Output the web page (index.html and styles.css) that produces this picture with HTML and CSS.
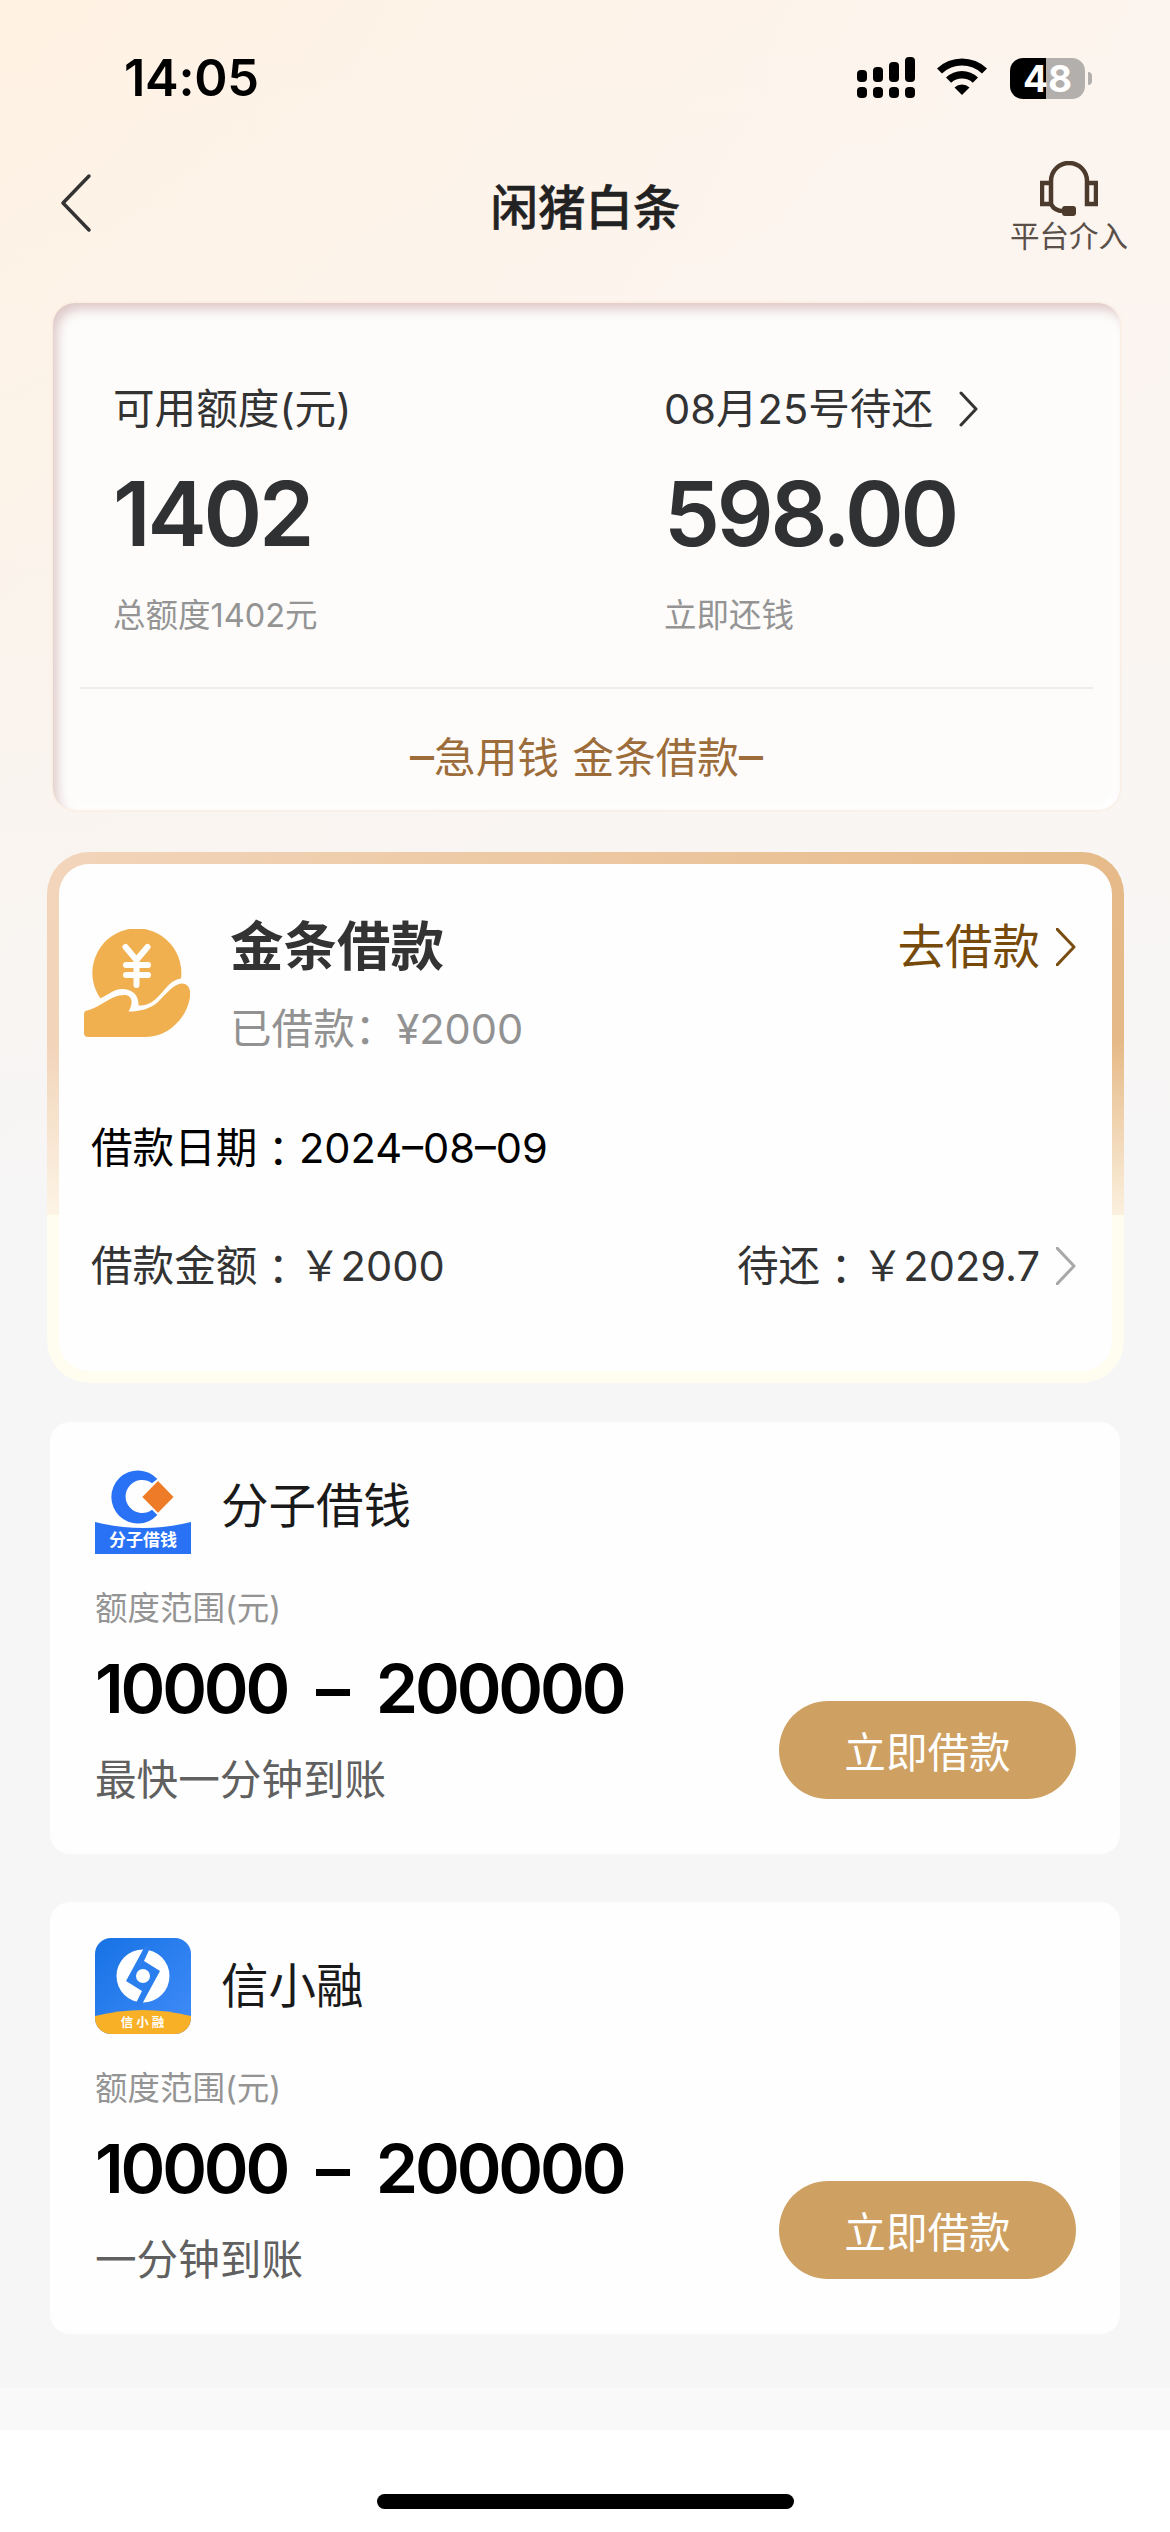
FILE: index.html
```html
<!DOCTYPE html>
<html lang="zh-CN">
<head>
<meta charset="utf-8">
<title>闲猪白条</title>
<link rel="stylesheet" href="styles.css">
</head>
<body>
<div class="screen">
  <header class="status">
    <span class="time">14:05</span>
    <div class="indicators">
      <svg class="signal" width="58" height="42" viewBox="0 0 58 42">
        <rect x="0" y="13" width="10" height="12" rx="4"/><rect x="16" y="10" width="10" height="15" rx="4"/>
        <rect x="32" y="5" width="10" height="20" rx="4"/><rect x="48" y="0" width="10" height="25" rx="4"/>
        <rect x="0" y="30" width="10" height="11" rx="4"/><rect x="16" y="30" width="10" height="11" rx="4"/>
        <rect x="32" y="30" width="10" height="11" rx="4"/><rect x="48" y="30" width="10" height="11" rx="4"/>
      </svg>
      <svg class="wifi" width="50" height="42" viewBox="0 0 50 42">
        <path d="M0 11.5A36 36 0 0 1 50 11.5L45 16.5A29 29 0 0 0 5 16.5Z"/>
        <path d="M9 20.500A23 23 0 0 1 41 20.500L35.800 25.700A16 16 0 0 0 14.200 25.700Z"/>
        <path d="M17.500 30.500A11 11 0 0 1 32.500 30.500L25 38Z"/>
      </svg>
      <div class="battery"><span class="level">48</span><i class="cap"></i></div>
    </div>
  </header>

  <nav class="nav">
    <svg class="back" width="34" height="60" viewBox="0 0 34 60"><path d="M30 3L4 30L30 57"/></svg>
    <h1 class="title">闲猪白条</h1>
    <a class="service">
      <svg width="58" height="56" viewBox="0 0 58 56">
        <path d="M11 22V20A18 18 0 0 1 47 20V22M11 22H2V43H11ZM47 22H56V43H47ZM11 43C14 49 18 50 23 50"/>
        <rect class="mic" x="22" y="45" width="14" height="10" rx="3"/>
      </svg>
      <span>平台介入</span>
    </a>
  </nav>

  <main class="content">
    <section class="quota">
      <div class="columns">
        <div class="column">
          <p class="label">可用额度(元)</p>
          <p class="amount">1402</p>
          <p class="note">总额度1402元</p>
        </div>
        <div class="column">
          <p class="label">08月25号待还<svg class="chevron dark" width="20" height="36" viewBox="0 0 20 36"><path d="M2 2L17 18L2 34"/></svg></p>
          <p class="amount">598.00</p>
          <p class="note">立即还钱</p>
        </div>
      </div>
      <p class="promo"><span class="dash">–</span>急用钱 金条借款<span class="dash">–</span></p>
    </section>

    <section class="loan">
      <div class="loan-body">
        <div class="loan-head">
          <svg class="coin" width="106" height="108" viewBox="0 0 106 108">
            <path class="gold" d="M16.300 69.300A44.500 44.500 0 1 1 97 49.500C84 51 79 66 68 73C63 76 58 76.500 54.500 76.500C55 67 49 60 38 60C30 60 24 66 16.300 69.300Z"/>
            <path class="gold" d="M0 85Q0 82 3 81.500C18 78 26 66 40 66C48 66 50 73 44.500 82.500C56 82.500 66 80 74 73C83 64 90 54.500 98 54.500C104 54.500 107 60 106 68C103 90 83 108 62 108H4Q0 108 0 104Z"/>
            <path class="yen" d="M41.500 18L52.500 31L63.500 18M52.500 31V56M42 36H64M42 46H64"/>
          </svg>
          <div class="loan-name">
            <h2>金条借款</h2>
            <p>已借款：¥2000</p>
          </div>
          <a class="go">去借款<svg class="chevron brown" width="20" height="38" viewBox="0 0 20 38"><path d="M1 1L18 19L1 37"/></svg></a>
        </div>
        <p class="date">借款日期<span class="mid" lang="zh-TW">：</span>2024–08–09</p>
        <div class="due">
          <p>借款金额<span class="mid" lang="zh-TW">：</span>￥2000</p>
          <div class="rest">
            <p>待还<span class="mid" lang="zh-TW">：</span>￥2029.7</p>
            <svg class="chevron gray" width="20" height="38" viewBox="0 0 20 38"><path d="M1 1L18 19L1 37"/></svg>
          </div>
        </div>
      </div>
    </section>

    <section class="product">
      <div class="brand">
        <svg class="logo" width="96" height="96" viewBox="0 0 96 96">
          <path d="M62.300 21A26.500 26.500 0 1 0 62.300 57L57 51.700A16.500 16.500 0 1 1 57 25.300Z" fill="#2a72f5"/>
          <path d="M47.300 39L63 23L78.500 39L63 54.800Z" fill="#ed7b27"/>
          <path d="M0 64Q48 76 96 64V96H0Z" fill="#2a72f5"/>
          <text x="48" y="88" text-anchor="middle" class="logo-text">分子借钱</text>
        </svg>
        <h3>分子借钱</h3>
      </div>
      <div class="offer">
        <div class="terms">
          <p class="range-label">额度范围(元)</p>
          <p class="range">10000 – 200000</p>
          <p class="speed">最快一分钟到账</p>
        </div>
        <button class="apply">立即借款</button>
      </div>
    </section>

    <section class="product">
      <div class="brand">
        <svg class="logo" width="96" height="96" viewBox="0 0 96 96">
          <defs>
            <linearGradient id="blue" x1="0" y1="0" x2="1" y2="1"><stop offset="0" stop-color="#1672e4"/><stop offset="1" stop-color="#428cfa"/></linearGradient>
            <clipPath id="tile"><rect width="96" height="96" rx="16"/></clipPath>
          </defs>
          <g clip-path="url(#tile)">
            <rect width="96" height="96" fill="url(#blue)"/>
            <path d="M0 78Q48 66 96 78V96H0Z" fill="#f8b026"/>
          </g>
          <circle cx="48" cy="38" r="26.500" fill="#fff"/>
          <path d="M50 8L43 21L31 43L47 53L40 67L45 70L53 55L65 33L49 23L55 10Z" fill="#2a7eee"/>
          <circle cx="48" cy="38" r="7" fill="#fff"/>
          <text x="49" y="89" text-anchor="middle" class="logo-text small">信小融</text>
        </svg>
        <h3>信小融</h3>
      </div>
      <div class="offer">
        <div class="terms">
          <p class="range-label">额度范围(元)</p>
          <p class="range">10000 – 200000</p>
          <p class="speed">一分钟到账</p>
        </div>
        <button class="apply">立即借款</button>
      </div>
    </section>
  </main>

  <footer class="home"><div class="home-bar"></div></footer>
</div>
</body>
</html>
```

FILE: styles.css
```css
* { box-sizing: border-box; margin: 0; padding: 0; }

body {
  font-family: Inter, "Noto Sans CJK SC", sans-serif;
  font-weight: 400;
  color: #333;
}

.screen {
  width: 1170px;
  height: 2532px;
  display: flex;
  flex-direction: column;
  overflow: hidden;
  background:
    linear-gradient(to bottom, rgba(246, 246, 246, 0) 0, rgba(246, 246, 247, 0.25) 500px, #f6f6f7 1300px),
    linear-gradient(115deg, #fff2e3 0, #fdf4ed 850px, #fcf5ef 1300px);
}

svg { display: block; flex: none; }

.status {
  height: 156px;
  padding: 0 78px 0 124px;
  display: flex;
  justify-content: space-between;
  align-items: center;
}
.time { font-size: 50.5px; font-weight: 600; line-height: 60px; letter-spacing: -0.3px; color: #000; }
.indicators { display: flex; align-items: center; }
.wifi { margin: 0 23px 0 22px; }
.battery { display: flex; align-items: center; gap: 3px; }
.level {
  width: 75px;
  height: 41px;
  border-radius: 13px;
  background: linear-gradient(to right, #000 36px, #b2afac 36px);
  color: #fff;
  font-size: 37px;
  font-weight: 700;
  line-height: 41px;
  text-align: center;
}
.cap { width: 4px; height: 13px; border-radius: 0 4px 4px 0; background: #b2afac; }

.nav {
  height: 147px;
  padding: 0 42px 0 59px;
  display: grid;
  grid-template-columns: 300px 1fr 300px;
}
.back { margin-top: 17px; fill: none; stroke: #333; stroke-width: 3.5; stroke-linecap: round; stroke-linejoin: round; }
.title {
  margin-top: 22px;
  padding-right: 16px;
  font-size: 47.5px;
  font-weight: 500;
  line-height: 60px;
  text-align: center;
  color: #222;
  -webkit-text-stroke: 0.5px #222;
}
.service { justify-self: end; padding-top: 5px; display: flex; flex-direction: column; align-items: center; }
.service svg { fill: none; stroke: #4c3a2c; stroke-width: 4.5; }
.service .mic { fill: #4c3a2c; stroke: none; }
.service span { margin-top: 1px; font-size: 29.5px; line-height: 36px; color: #5a5049; }

.content { flex: 1; display: flex; flex-direction: column; background: linear-gradient(to bottom, transparent 2085px, #f9f9f9 2085px); }

.quota {
  margin: 0 50px 0 53px;
  height: 507px;
  padding: 0 27px;
  border-radius: 22px;
  background: #fdfcfb;
  box-shadow: inset 5px 7px 12px -1px #dcc6c5, inset -5px -5px 10px #fff, 0 0 3px #fce2cb;
}
.columns {
  height: 386px;
  padding: 76px 33px 0;
  display: grid;
  grid-template-columns: 551px 1fr;
  border-bottom: 2px solid #ececec;
}
.label { display: flex; align-items: center; gap: 26px; font-size: 41.6px; line-height: 60px; }
.amount { margin-top: 20px; font-size: 89px; font-weight: 600; line-height: 110px; letter-spacing: -3.2px; color: #303133; }
.note { margin-top: 23px; font-size: 32.5px; line-height: 48px; color: #949494; }
.promo { margin-top: 39px; font-size: 41.6px; line-height: 60px; text-align: center; word-spacing: 2px; color: #9c6c3a; }
.dash { font-size: 48px; line-height: 1; }

.chevron { fill: none; stroke-width: 3; stroke-linecap: round; stroke-linejoin: round; }
.dark { stroke: #333; }
.brown { stroke: #7a4e12; }
.gray { stroke: #a8a8a8; }

.loan {
  margin: 42px 46px 0 47px;
  height: 531px;
  padding: 12px;
  border-radius: 42px;
  background:
    linear-gradient(to bottom, transparent 190px, rgba(255, 250, 238, 0.85) 363px, #fffdf0 363px),
    linear-gradient(100deg, #f2d5bb, #e5b884);
}
.loan-body { height: 507px; padding: 53px 36px 0 25px; border-radius: 30px; background: #fefefe; }
.loan-head { height: 201px; display: flex; }
.coin { margin-top: 12px; }
.gold { fill: #f0b04f; }
.yen { fill: none; stroke: #fff; stroke-width: 6; stroke-linecap: round; }
.loan-name { margin-left: 40px; flex: 1; }
.loan-name h2 { font-size: 53.5px; font-weight: 700; line-height: 60px; }
.loan-name p { margin-top: 22px; font-size: 41.6px; line-height: 60px; color: #929292; }
.go, .rest { display: flex; align-items: center; gap: 16px; }
.go { height: 60px; font-size: 47.5px; line-height: 60px; color: #754a0a; }
.date, .due { height: 60px; padding-left: 7px; font-size: 41.6px; line-height: 60px; }
.date { color: #000; }
.due { margin-top: 58px; display: flex; justify-content: space-between; }
.mid { font-family: "Noto Sans CJK TC", sans-serif; line-height: 1; vertical-align: -4px; }

.product { margin: 48px 50px 0; height: 432px; padding: 36px 44px 0 45px; border-radius: 20px; background: #fefefe; }
.loan + .product { margin-top: 39px; }
.brand { display: flex; align-items: center; gap: 30px; }
.brand h3 { font-size: 47.5px; font-weight: 400; line-height: 60px; color: #1a1a1a; }
.logo-text { font-size: 17px; font-weight: 700; fill: #fff; }
.logo-text.small { font-size: 12.5px; letter-spacing: 3px; }
.offer { display: flex; justify-content: space-between; }
.range-label { margin-top: 31px; font-size: 32.5px; line-height: 48px; color: #949494; }
.range {
  margin-top: 15px;
  font-size: 68px;
  font-weight: 600;
  line-height: 80px;
  letter-spacing: -3.2px;
  word-spacing: 15px;
  color: #000;
  white-space: pre;
}
.speed { margin-top: 22px; font-size: 41.6px; line-height: 60px; color: #606060; }
.apply {
  width: 297px;
  height: 98px;
  margin-top: 147px;
  border: 0;
  border-radius: 49px;
  background: #cea162;
  font: inherit;
  font-size: 41.6px;
  color: #fff;
}

.home { height: 102px; padding-top: 64px; background: #fff; }
.home-bar { width: 417px; height: 15px; margin: 0 auto; border-radius: 8px; background: #000; }
```
